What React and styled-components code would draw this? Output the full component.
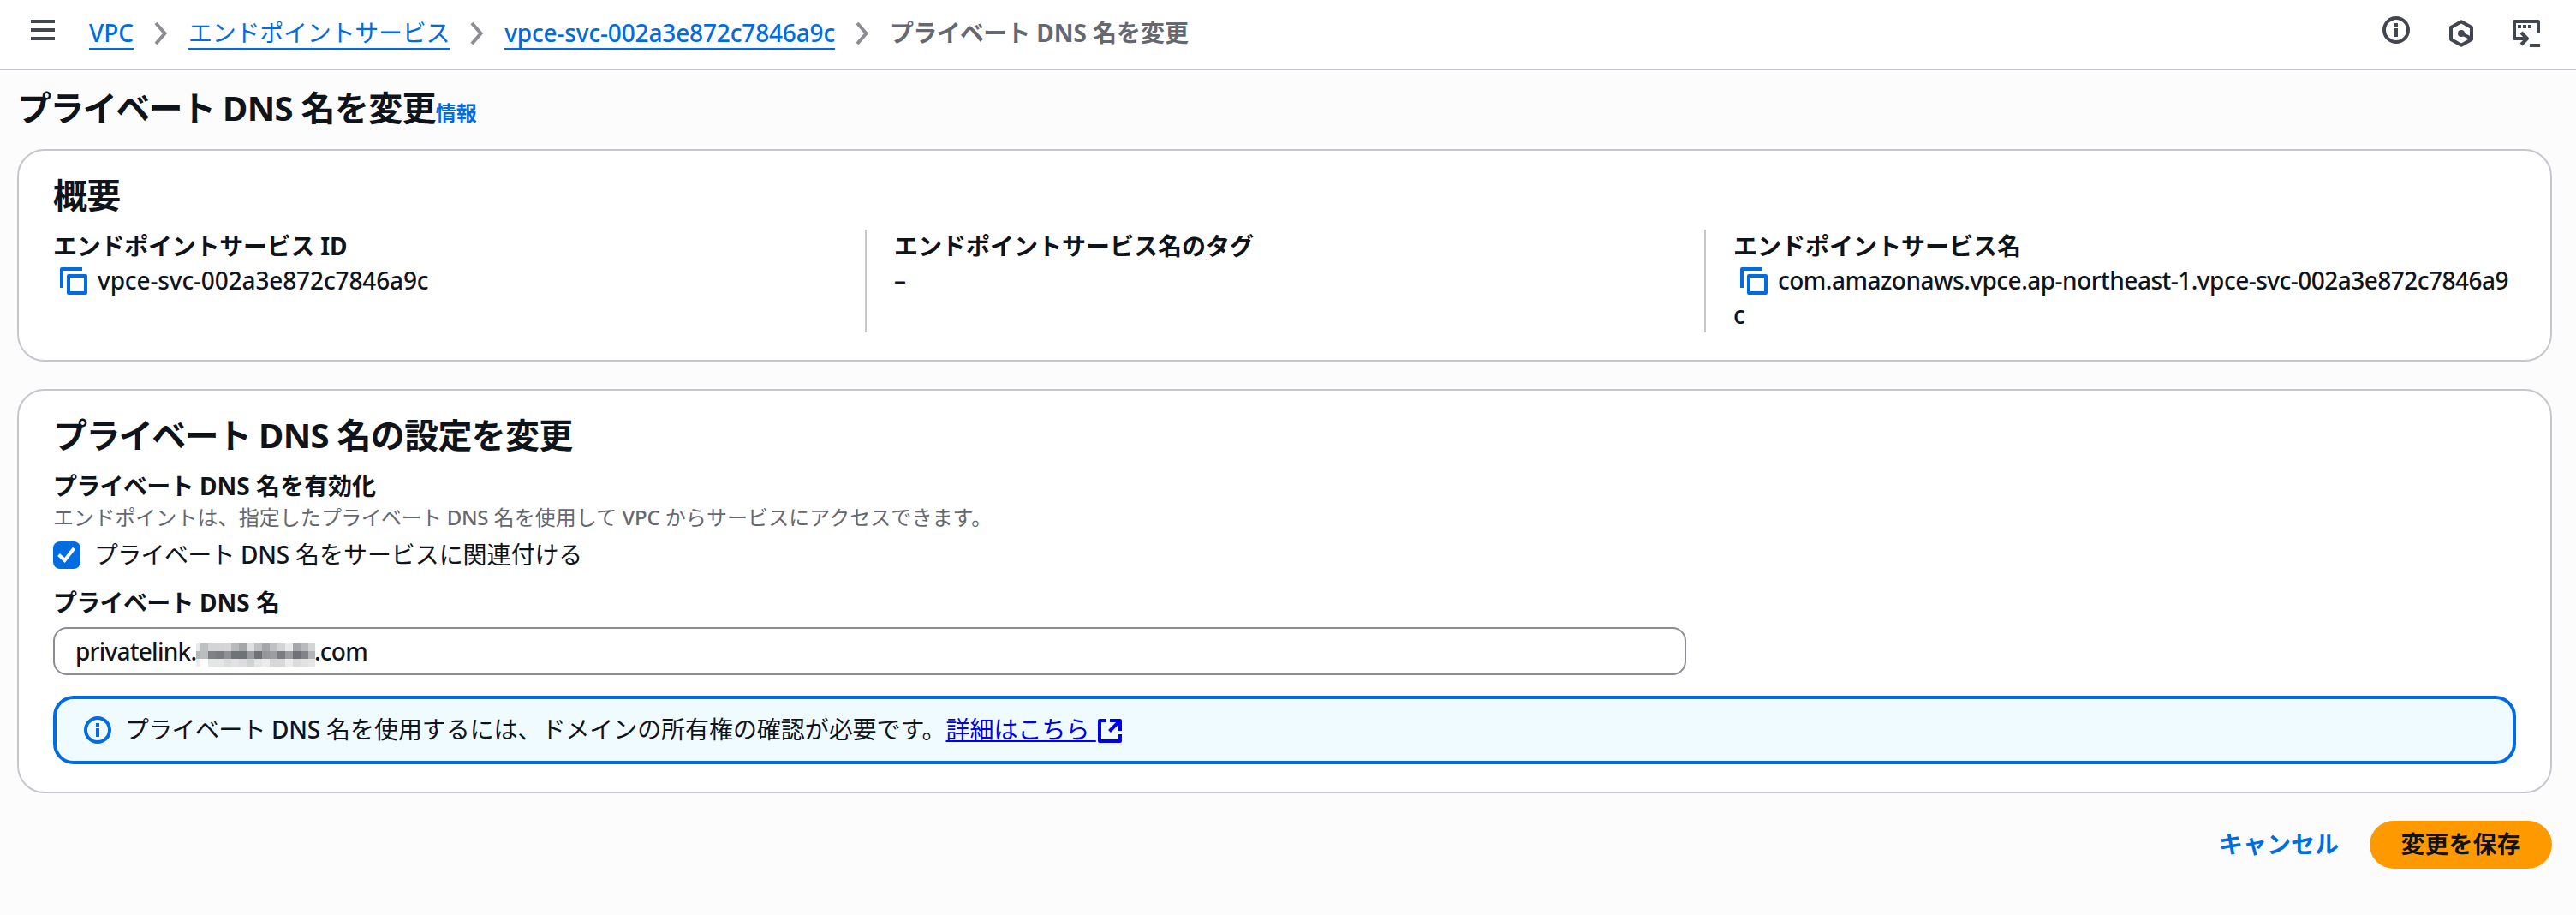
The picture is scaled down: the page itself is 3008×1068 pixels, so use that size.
import React, { useState } from 'react'
import styled, { createGlobalStyle, css } from 'styled-components'

const GlobalStyle = createGlobalStyle`
  * {
    box-sizing: border-box;
  }

  body {
    margin: 0;
    background: #fcfcfd;
    color: #0f141a;
    font-family: 'Noto Sans', 'Noto Sans CJK JP', sans-serif;
    font-size: 28px;
    line-height: 40px;
  }
`

const Page = styled.div`
  min-height: 1068px;
  background: #fcfcfd;
`

const TopBar = styled.header`
  display: flex;
  justify-content: space-between;
  align-items: flex-start;
  height: 82px;
  padding: 19px 42px 0 36px;
  background: #ffffff;
  border-bottom: 2px solid #c6c6cd;
`

const IconButton = styled.button`
  display: flex;
  padding: 0;
  border: none;
  background: none;
  color: #424650;
  cursor: pointer;
  margin-top: ${props => props.$drop || 0}px;
`

const Navigation = styled.div`
  display: flex;
  align-items: flex-start;
  gap: 40px;
`

const Breadcrumbs = styled.nav`
  display: flex;
  align-items: flex-start;
  gap: 24px;
`

const Crumb = styled.a`
  height: 39px;
  line-height: 38px;
  color: #006ce0;
  text-decoration: none;
  white-space: nowrap;
  font-weight: ${props => props.$weight || 400};
  letter-spacing: ${props => props.$tracking || 0}px;
  border-bottom: 2px solid #006ce0;
`

const CurrentCrumb = styled.span`
  line-height: 38px;
  color: #656871;
  font-weight: 700;
  white-space: nowrap;
`

const Separator = styled.svg`
  margin-top: 7px;
  color: #8c8c94;
`

const Tools = styled.div`
  display: flex;
  align-items: flex-start;
  gap: 45px;
`

// Katakana runs are set slightly tighter than the rest
const Kana = styled.span`
  letter-spacing: ${props => (props.$heading ? '-0.04em' : '-0.025em')};
`

const Latin = styled.span`
  font-weight: 500;
  letter-spacing: -0.25px;
`

const Content = styled.main`
  padding: 20px 28px 0 20px;
`

const TitleRow = styled.div`
  display: flex;
  align-items: baseline;
  height: 48px;
  margin-bottom: 24px;
`

const heading = css`
  margin: 0;
  font-size: 40px;
  font-weight: 700;
  line-height: 48px;
  letter-spacing: -0.7px;
`

const Title = styled.h1`
  ${heading}
`

const SectionTitle = styled.h2`
  ${heading}
  margin-bottom: 16px;
`

const InfoLink = styled.a`
  color: #006ce0;
  font-size: 24px;
  font-weight: 700;
  line-height: 32px;
  text-decoration: none;
`

const Panel = styled.section`
  background: #ffffff;
  border: 2px solid #c6c6cd;
  border-radius: 32px;
  padding: 28px 40px 32px;
  margin-bottom: 32px;
`

const Columns = styled.div`
  display: grid;
  grid-template-columns: repeat(3, 1fr);
  margin: 0 -32px;
`

const Column = styled.div`
  min-height: 120px;
  padding: 0 32px;

  & + & {
    border-left: 2px solid #c6c6cd;
  }
`

const Label = styled.div`
  font-weight: 700;
  line-height: 38px;
  padding-bottom: 2px;
  letter-spacing: ${props => props.$tracking || 0}px;
`

const Value = styled.div`
  margin-top: -1px;
  font-weight: 500;
  word-break: break-all;
  letter-spacing: ${props => props.$tracking || 0}px;
`

const CopyButton = styled.button`
  display: inline-block;
  width: 32px;
  height: 32px;
  margin: 0 12px 0 8px;
  padding: 0;
  border: none;
  background: none;
  color: #006ce0;
  vertical-align: -6px;
  line-height: 0;
  cursor: pointer;
`

const Description = styled.div`
  color: #656871;
  font-size: 24px;
  line-height: 32px;
  letter-spacing: 0.07px;
  margin-bottom: 8px;
`

const CheckboxRow = styled.label`
  display: flex;
  align-items: center;
  gap: 16px;
  height: 40px;
  margin-bottom: 16px;
  cursor: pointer;
`

const CheckboxBox = styled.span`
  display: flex;
  width: 32px;
  height: 32px;
  border-radius: 8px;
  background: ${props => (props.$checked ? '#006ce0' : '#ffffff')};
  border: ${props => (props.$checked ? 'none' : '2px solid #8c8c94')};
  color: #ffffff;
`

const CheckboxInput = styled.input`
  display: none;
`

const CheckboxText = styled.span`
  line-height: 38px;
  padding-bottom: 2px;
  letter-spacing: -0.07px;
`

const TextField = styled.div`
  display: flex;
  align-items: center;
  width: 1907px;
  height: 56px;
  margin: 8px 0 24px;
  padding: 0 24px;
  background: #ffffff;
  border: 2px solid #8c8c94;
  border-radius: 16px;
  font-weight: 500;
  line-height: 38px;
  letter-spacing: -0.75px;
`

const FieldPrefix = styled.span`
  width: 141px;
  white-space: nowrap;
`

const FieldSuffix = styled.span`
  margin-left: -1px;
`

const Mosaic = styled.span`
  display: grid;
  grid-template-columns: 5px repeat(14, 9px) 8px;
  grid-auto-rows: 9px;
  margin-top: 9px;
`

const Tile = styled.span`
  background: ${props => props.$shade};
`

const Alert = styled.div`
  display: flex;
  align-items: center;
  gap: 16px;
  height: 80px;
  padding: 0 32px;
  background: #f0fbff;
  border: 4px solid #006ce0;
  border-radius: 24px;
`

const AlertIcon = styled.span`
  display: flex;
  color: #006ce0;
`

const AlertText = styled.div`
  line-height: 38px;
  padding-bottom: 2px;
  letter-spacing: -0.07px;
`

const ExternalLink = styled.a`
  color: #0000ee;
  text-decoration: underline;
  letter-spacing: 0;

  svg {
    margin-left: 2px;
    vertical-align: -5px;
  }
`

const Actions = styled.div`
  display: flex;
  justify-content: flex-end;
  align-items: center;
  gap: 36px;
`

const Button = styled.button`
  height: 56px;
  padding: 0 0 2px;
  border: none;
  border-radius: 28px;
  background: none;
  color: #006ce0;
  font-family: inherit;
  font-size: 28px;
  font-weight: 700;
  line-height: 38px;
  cursor: pointer;

  ${props => props.$primary && css`
    width: 213px;
    background: #ff9900;
    color: #0f141a;
  `}
`

const mosaicShades = [
  '#e9eaea #bfc0c2 #d3d4d5 #d3d4d5 #d6d6d7 #b9babc #a6a7aa #dfe0e1 #bfc0c2 #a6a7aa #bfc0c2 #d3d4d5 #e9eaea #a6a7aa #b9babc #d3d4d5',
  '#b5b6b8 #bcbdbf #7f8285 #797c80 #8f9194 #6f7377 #6f7377 #9a9b9e #6f7377 #96979b #9c9da0 #797c80 #9a9ca0 #6f7377 #808387 #b3b4b6',
  '#eeeeee #ffffff #e4e5e5 #e4e5e5 #dcdcdd #e2e2e3 #dcdcdd #d2d3d3 #e4e5e5 #ececec #d8d8d9 #d8d8d9 #ececec #dcdcdd #e2e2e3 #e6e6e6',
].join(' ').split(' ')

const MenuIcon = () => (
  <svg width="28" height="24" viewBox="0 0 28 24" stroke="currentColor" strokeWidth="4">
    <path d="M0 2h28M0 12h28M0 22h28" />
  </svg>
)

const Chevron = () => (
  <Separator width="16" height="26" viewBox="0 0 16 26" fill="none" stroke="currentColor" strokeWidth="4">
    <path d="M2 1l10.500 12L2 25" />
  </Separator>
)

const InfoIcon = () => (
  <svg width="32" height="32" viewBox="0 0 32 32" fill="none" stroke="currentColor" strokeWidth="4">
    <circle cx="16" cy="16" r="14" />
    <path d="M16 8v4M16 14v10" />
  </svg>
)

const HexagonIcon = () => (
  <svg width="30" height="32" viewBox="0 0 30 32" fill="none" stroke="currentColor" strokeWidth="4" strokeLinejoin="round">
    <path d="M15 2.300L27 9v14L15 29.700 3 23V9z" />
    <path d="M15 16l11 5.500" />
    <circle cx="15" cy="16" r="4" fill="currentColor" stroke="none" />
  </svg>
)

const ShellIcon = () => (
  <svg width="32" height="32" viewBox="0 0 32 32" fill="none" stroke="currentColor" strokeWidth="4" strokeLinejoin="round">
    <path d="M30 16V2H2v20h15" />
    <path d="M10 15l7 7-7 7" />
    <path d="M6 8h4M12 8h4M18 8h4M20 30h12" />
  </svg>
)

const CopyIcon = () => (
  <svg width="32" height="32" viewBox="0 0 32 32" fill="none" stroke="currentColor" strokeWidth="4" strokeLinejoin="round">
    <path d="M26 2H2v22" />
    <path d="M10 10h20v20H10z" />
  </svg>
)

const CheckIcon = () => (
  <svg width="32" height="32" viewBox="0 0 32 32" fill="none" stroke="currentColor" strokeWidth="4">
    <path d="M6.500 15.500l7 6.500L24.500 8" />
  </svg>
)

const ExternalIcon = () => (
  <svg width="28" height="28" viewBox="0 0 28 28" fill="none" stroke="currentColor" strokeWidth="4" strokeLinejoin="round">
    <path d="M10 2H2v24h24v-8" />
    <path d="M14 2h12v12M26 2L13.500 14.500" />
  </svg>
)

const Copyable = ({ children }) => (
  <>
    <CopyButton aria-label="コピー"><CopyIcon /></CopyButton>
    {children}
  </>
)

const App = () => {
  const [enabled, setEnabled] = useState(true)

  return (
    <Page lang="ja">
      <GlobalStyle />

      <TopBar>
        <Navigation>
          <IconButton $drop={4}><MenuIcon /></IconButton>
          <Breadcrumbs>
            <Crumb href="#" $weight={500}>VPC</Crumb>
            <Chevron />
            <Crumb href="#" $tracking={-0.27}>エンドポイントサービス</Crumb>
            <Chevron />
            <Crumb href="#" $weight={500} $tracking={-0.15}>vpce-svc-002a3e872c7846a9c</Crumb>
            <Chevron />
            <CurrentCrumb><Kana>プライベート</Kana> DNS 名を変更</CurrentCrumb>
          </Breadcrumbs>
        </Navigation>
        <Tools>
          <IconButton><InfoIcon /></IconButton>
          <IconButton $drop={4}><HexagonIcon /></IconButton>
          <IconButton $drop={4}><ShellIcon /></IconButton>
        </Tools>
      </TopBar>

      <Content>
        <TitleRow>
          <Title><Kana $heading>プライベート</Kana> DNS 名を変更</Title>
          <InfoLink href="#">情報</InfoLink>
        </TitleRow>

        <Panel>
          <SectionTitle>概要</SectionTitle>
          <Columns>
            <Column>
              <Label $tracking={-0.25}>エンドポイントサービス ID</Label>
              <Value $tracking={-0.13}><Copyable>vpce-svc-002a3e872c7846a9c</Copyable></Value>
            </Column>
            <Column>
              <Label>エンドポイントサービス名のタグ</Label>
              <Value>–</Value>
            </Column>
            <Column>
              <Label>エンドポイントサービス名</Label>
              <Value $tracking={-0.51}>
                <Copyable>com.amazonaws.vpce.ap-northeast-1.vpce-svc-002a3e872c7846a9c</Copyable>
              </Value>
            </Column>
          </Columns>
        </Panel>

        <Panel>
          <SectionTitle><Kana $heading>プライベート</Kana> DNS 名の設定を変更</SectionTitle>
          <Label><Kana>プライベート</Kana> DNS 名を有効化</Label>
          <Description>
            エンドポイントは、指定した<Kana>プライベート</Kana> <Latin>DNS</Latin> 名を使用して <Latin>VPC</Latin> からサービスにアクセスできます。
          </Description>
          <CheckboxRow>
            <CheckboxInput type="checkbox" checked={enabled} onChange={() => setEnabled(!enabled)} />
            <CheckboxBox $checked={enabled}>{enabled && <CheckIcon />}</CheckboxBox>
            <CheckboxText><Kana>プライベート</Kana> <Latin>DNS</Latin> 名をサービスに関連付ける</CheckboxText>
          </CheckboxRow>
          <Label><Kana>プライベート</Kana> DNS 名</Label>
          <TextField>
            <FieldPrefix>privatelink.</FieldPrefix>
            <Mosaic>
              {mosaicShades.map((shade, index) => (
                <Tile key={index} $shade={shade} />
              ))}
            </Mosaic>
            <FieldSuffix>.com</FieldSuffix>
          </TextField>
          <Alert>
            <AlertIcon><InfoIcon /></AlertIcon>
            <AlertText>
              <Kana>プライベート</Kana> <Latin>DNS</Latin> 名を使用するには、ドメインの所有権の確認が必要です。
              <ExternalLink href="#">詳細はこちら <ExternalIcon /></ExternalLink>
            </AlertText>
          </Alert>
        </Panel>

        <Actions>
          <Button>キャンセル</Button>
          <Button $primary>変更を保存</Button>
        </Actions>
      </Content>
    </Page>
  )
}

export default App
